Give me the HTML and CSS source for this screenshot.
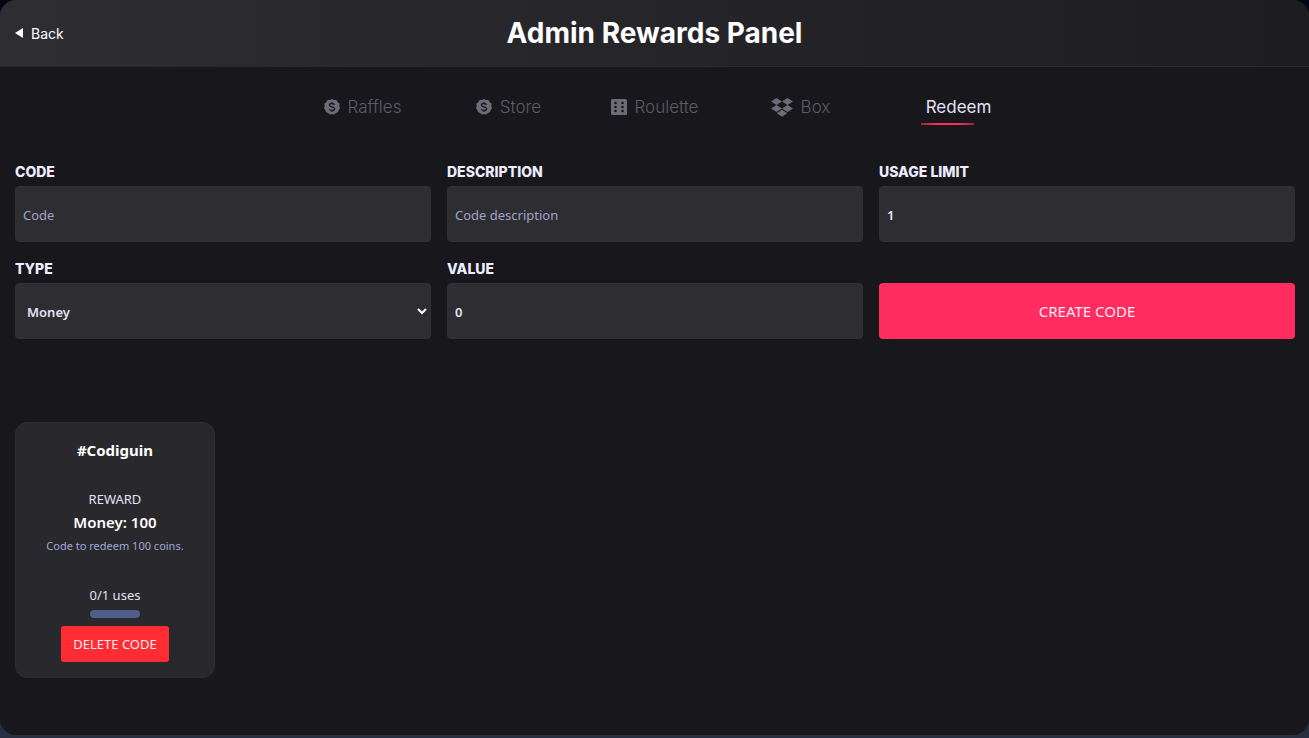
FILE: index.html
```html
<!DOCTYPE html>
<html lang="en">

<head>
  <meta charset="UTF-8">
  <meta name="viewport" content="width=device-width, initial-scale=1.0">
  <title>Admin Rewards Panel</title>
  <link rel="stylesheet" href="styles.css">
</head>

<body>
  <div class="panel">
    <header class="header">
      <a href="#" class="back">
        <svg width="8" height="10" viewBox="0 0 8 10"><path d="M8 0v10L0 5z" fill="currentColor"/></svg>
        Back
      </a>
      <h1>Admin Rewards Panel</h1>
    </header>

    <nav class="tabs">
      <a href="#" class="tab">
        <svg width="16" height="16" viewBox="0 0 16 16">
          <path d="M8 0l2 1 2.300.1 1.400 1.900L15.600 4.800 15.300 7 16 9l-1.300 1.900-.6 2.200-2.200.8L10.200 15.600 8 15.300 5.800 15.600 4.100 13.900 1.900 13.100 1.300 10.900 0 9 .7 7 .4 4.800 2.300 3 3.700 1.100 6 1z" fill="currentColor"/>
          <path d="M10.600 5.800C10 4.800 9 4.500 8 4.500c-1.400 0-2.500.6-2.500 1.700 0 2.500 5.200 1.100 5.200 3.600 0 1.100-1.200 1.800-2.700 1.800-1.200 0-2.200-.5-2.700-1.400M8 3v1.500M8 11.500V13" fill="none" stroke="#18171c" stroke-width="1.300"/>
        </svg>
        Raffles
      </a>
      <a href="#" class="tab">
        <svg width="16" height="16" viewBox="0 0 16 16">
          <path d="M8 0l2 1 2.300.1 1.400 1.900L15.600 4.800 15.300 7 16 9l-1.300 1.900-.6 2.200-2.200.8L10.200 15.600 8 15.300 5.800 15.600 4.100 13.900 1.900 13.100 1.300 10.900 0 9 .7 7 .4 4.800 2.300 3 3.700 1.100 6 1z" fill="currentColor"/>
          <path d="M10.600 5.800C10 4.800 9 4.500 8 4.500c-1.400 0-2.500.6-2.500 1.700 0 2.500 5.200 1.100 5.200 3.600 0 1.100-1.200 1.800-2.700 1.800-1.200 0-2.200-.5-2.700-1.400M8 3v1.500M8 11.500V13" fill="none" stroke="#18171c" stroke-width="1.300"/>
        </svg>
        Store
      </a>
      <a href="#" class="tab">
        <svg width="16" height="16" viewBox="0 0 16 16">
          <rect width="16" height="16" rx="1.500" fill="currentColor"/>
          <g fill="#18171c">
            <circle cx="4.500" cy="4" r="1.300"/><circle cx="11.500" cy="4" r="1.300"/>
            <circle cx="4.500" cy="8" r="1.300"/><circle cx="11.500" cy="8" r="1.300"/>
            <circle cx="4.500" cy="12" r="1.300"/><circle cx="11.500" cy="12" r="1.300"/>
          </g>
        </svg>
        Roulette
      </a>
      <a href="#" class="tab">
        <svg width="22" height="19" viewBox="0 0 22 19">
          <path d="M5.500 0L11 3.500 5.500 7 0 3.500zM16.500 0L22 3.500 16.500 7 11 3.500zM5.500 7L11 10.500 5.500 14 0 10.500zM16.500 7L22 10.500 16.500 14 11 10.500zM11 11.800l5.300 3.500L11 18.800l-5.300-3.500z" fill="currentColor"/>
        </svg>
        Box
      </a>
      <a href="#" class="tab active"><span class="tab-icon"></span>Redeem</a>
    </nav>

    <form class="code-form">
      <div class="field">
        <label for="code">CODE</label>
        <input type="text" id="code" placeholder="Code">
      </div>
      <div class="field">
        <label for="description">DESCRIPTION</label>
        <input type="text" id="description" placeholder="Code description">
      </div>
      <div class="field">
        <label for="limit">USAGE LIMIT</label>
        <input type="number" id="limit" value="1">
      </div>
      <div class="field">
        <label for="type">TYPE</label>
        <select id="type">
          <option>Money</option>
        </select>
      </div>
      <div class="field">
        <label for="value">VALUE</label>
        <input type="number" id="value" value="0">
      </div>
      <button type="button" class="create">CREATE CODE</button>
    </form>

    <div class="codes">
      <div class="card">
        <h2>#Codiguin</h2>
        <div class="reward">
          <p class="reward-label">REWARD</p>
          <p class="reward-value">Money: 100</p>
          <p class="reward-text">Code to redeem 100 coins.</p>
        </div>
        <div class="uses">
          <p>0/1 uses</p>
          <div class="bar"></div>
        </div>
        <button type="button" class="delete">DELETE CODE</button>
      </div>
    </div>
  </div>
</body>

</html>
```
FILE: styles.css
```css
* {
  padding: 0;
  margin: 0;
  box-sizing: border-box;
}

body {
  min-height: 100vh;
  padding-bottom: 3px;
  display: flex;
  background: linear-gradient(#030616, #263040);
  font-family: 'Noto Sans', 'Open Sans', sans-serif;
  color: #fff;
}

.panel {
  flex: 1;
  background: #18171c;
  border-radius: 16px;
  overflow: hidden;
}

.header {
  display: grid;
  grid-template-columns: 1fr auto 1fr;
  align-items: center;
  height: 67px;
  padding: 0 15px;
  background: linear-gradient(90deg, #2e2d31, #1d1c21);
  border-bottom: 1px solid #2b2a2f;
  font-family: Inter, sans-serif;
}

.back {
  display: flex;
  align-items: center;
  gap: 8px;
  color: #fff;
  font-size: 14px;
  text-decoration: none;
}

h1 {
  font-size: 28px;
  font-weight: 700;
}

.tabs {
  display: grid;
  grid-template-columns: repeat(5, 146px);
  justify-content: center;
  padding-top: 20px;
}

.tab {
  position: relative;
  display: flex;
  justify-content: center;
  align-items: center;
  gap: 8px;
  height: 38px;
  padding-top: 2px;
  color: #5d5c66;
  font-family: Inter, sans-serif;
  font-size: 17px;
  font-weight: 300;
  text-decoration: none;
}

.tab svg {
  color: #6c6b78;
}

.tab-icon {
  width: 16px;
}

.active {
  color: #e4e2f5;
  font-weight: 400;
}

.active::after {
  content: "";
  position: absolute;
  bottom: 0;
  left: 50%;
  width: 53px;
  height: 2px;
  margin-left: -26px;
  background: linear-gradient(90deg, #a02445, #ff2c60 30%, #ff2c60 70%, #a02445);
}

.code-form {
  display: grid;
  grid-template-columns: repeat(3, 1fr);
  gap: 16px;
  align-items: end;
  padding: 36px 14px 0 15px;
}

.field {
  display: flex;
  flex-direction: column;
  gap: 4px;
}

label {
  font-family: Inter, sans-serif;
  font-size: 14px;
  font-weight: 800;
  line-height: 21px;
  color: #eeecff;
}

input,
select,
.create {
  width: 100%;
  height: 56px;
  border: 1px solid #313035;
  border-radius: 4px;
}

input,
select {
  padding: 2px 7px 0;
  background: #2e2d31;
  color: #e4e2f5;
  font-family: inherit;
  font-size: 13px;
  font-weight: 600;
}

input::placeholder {
  color: #a0a3c8;
  font-weight: 400;
}

select {
  appearance: none;
  padding: 2px 11px 0;
  background: #2e2d31 url("data:image/svg+xml,%3Csvg xmlns='http://www.w3.org/2000/svg' width='10' height='7'%3E%3Cpath d='M1 1l4 4 4-4' fill='none' stroke='white' stroke-width='2'/%3E%3C/svg%3E") no-repeat right 3px center;
}

.create {
  border: none;
  background: #ff2c60;
  color: #ffe9f2;
  font-family: inherit;
  font-size: 15px;
}

.codes {
  display: flex;
  flex-wrap: wrap;
  gap: 16px;
  padding: 83px 15px 16px;
}

.card {
  display: flex;
  flex-direction: column;
  align-items: center;
  width: 200px;
  padding: 15px;
  background: #29282c;
  border: 1px solid #2c2b2f;
  border-radius: 12px;
  text-align: center;
}

h2 {
  font-size: 15px;
  line-height: 24px;
}

.reward {
  padding: 26px 0;
}

.reward-label,
.uses {
  font-size: 13px;
  line-height: 22px;
  color: #e4e2f5;
}

.reward-value {
  font-size: 15px;
  font-weight: 600;
  line-height: 24px;
}

.reward-text {
  font-size: 11px;
  line-height: 24px;
  color: #a0a9d4;
}

.bar {
  height: 8px;
  margin: 4px 0 8px;
  border-radius: 4px;
  background: #4e5f8d;
}

.delete {
  height: 36px;
  padding: 0 12px;
  border: none;
  border-radius: 3px;
  background: #ff2d33;
  color: #ffe9f2;
  font-family: inherit;
  font-size: 13px;
}
```
